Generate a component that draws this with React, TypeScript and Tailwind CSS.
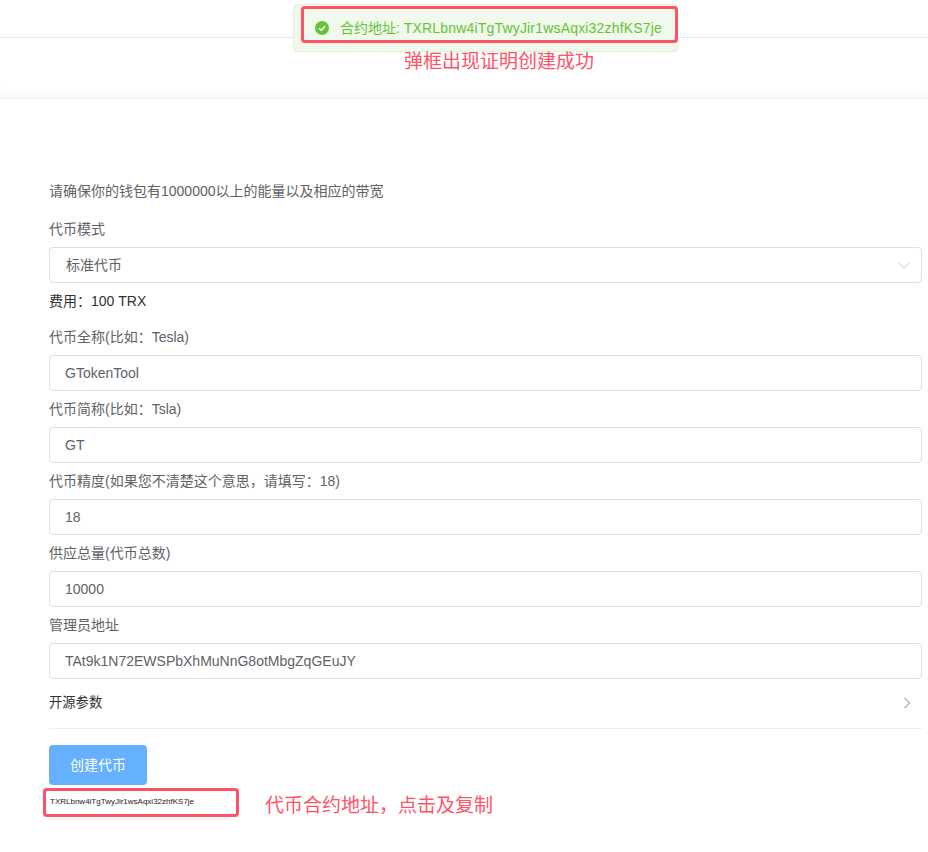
import React from 'react'

const address = 'TXRLbnw4iTgTwyJir1wsAqxi32zhfKS7je'

const fields = [
  { label: '代币全称(比如：Tesla)', value: 'GTokenTool' },
  { label: '代币简称(比如：Tsla)', value: 'GT' },
  { label: '代币精度(如果您不清楚这个意思，请填写：18)', value: '18' },
  { label: '供应总量(代币总数)', value: '10000' },
  { label: '管理员地址', value: 'TAt9k1N72EWSPbXhMuNnG8otMbgZqGEuJY' },
]

function Field({ label, value }: { label: string; value: string }) {
  return (
    <div>
      <div className="flex h-9 items-center text-sm text-[#606266]">{label}</div>
      <input
        readOnly
        value={value}
        className="block h-9 w-full rounded border border-[#dcdfe6] bg-white px-[15px] text-sm text-[#606266] outline-none"
      />
    </div>
  )
}

export default function App() {
  return (
    <div className="relative h-[852px] w-full overflow-hidden bg-white font-['Liberation_Sans','Noto_Sans_CJK_SC',sans-serif]">
      <header>
        <div className="h-[38px] border-b border-[#e6e6e6]" />
        <div className="h-[61px] border-b border-[#eeeef6] shadow-[inset_0_-14px_14px_-14px_#f0f0f6]" />
      </header>

      <main className="ml-[49px] mr-1.5 pt-[82px]">
        <p className="h-5 text-sm leading-5 text-[#606266]">请确保你的钱包有1000000以上的能量以及相应的带宽</p>

        <div className="mt-2.5">
          <div className="flex h-9 items-center text-sm text-[#606266]">代币模式</div>
          <div className="flex h-9 items-center justify-between rounded border border-[#dcdfe6] bg-white pl-4 pr-2.5 text-sm text-[#606266]">
            <span>标准代币</span>
            <svg width="14" height="14" viewBox="0 0 14 14" fill="none" stroke="#c0c4cc" strokeWidth="1">
              <path d="M1.5 4.5 7 10l5.5-5.5" />
            </svg>
          </div>
        </div>
        <div className="flex h-9 items-center text-sm text-[#303133]">费用：100 TRX</div>

        {fields.map((field) => (
          <Field key={field.label} label={field.label} value={field.value} />
        ))}

        <div className="flex h-[50px] items-center justify-between border-b border-[#ebeef5] pb-px text-[13.3px] text-[#303133]">
          <span>开源参数</span>
          <svg className="mr-[11px]" width="8" height="12" viewBox="0 0 8 12" fill="none" stroke="#6b7a90" strokeWidth="1">
            <path d="M1.5 1 6.5 6l-5 5" />
          </svg>
        </div>

        <button className="mt-4 block h-10 w-[98px] rounded bg-[#66b1ff] text-sm text-white">创建代币</button>
        <div className="mt-3 pl-px text-[8px] leading-[10px] text-[#222222]">{address}</div>
      </main>

      {/* toast and red annotations lie over the page */}
      <div className="absolute left-[293px] top-1 flex h-12 w-[385px] items-center rounded border border-[#e1f3d8] bg-[#f0f9eb] pl-[21px]">
        <svg width="14" height="14" viewBox="0 0 16 16">
          <circle cx="8" cy="8" r="8" fill="#67c23a" />
          <path d="M4.6 8.2 7.1 10.6 11.4 5.9" fill="none" stroke="#fff" strokeWidth="1.6" />
        </svg>
        <span className="ml-[11px] text-sm text-[#67c23a]">
          合约地址: <span className="tracking-[0.18px]">{address}</span>
        </span>
      </div>
      <div className="absolute left-[301px] top-1.5 h-[37px] w-[377px] rounded-sm border-[3.5px] border-[#ff5266]" />
      <div className="absolute left-[404px] top-[51px] text-[19px] leading-[22px] text-[#ff5266]">弹框出现证明创建成功</div>

      <div className="absolute left-[43px] top-[788px] h-[29px] w-[196px] rounded-sm border-[3.5px] border-[#ff5266]" />
      <div className="absolute left-[265px] top-[795px] text-[19px] leading-[22px] text-[#ff5266]">代币合约地址，点击及复制</div>
    </div>
  )
}
